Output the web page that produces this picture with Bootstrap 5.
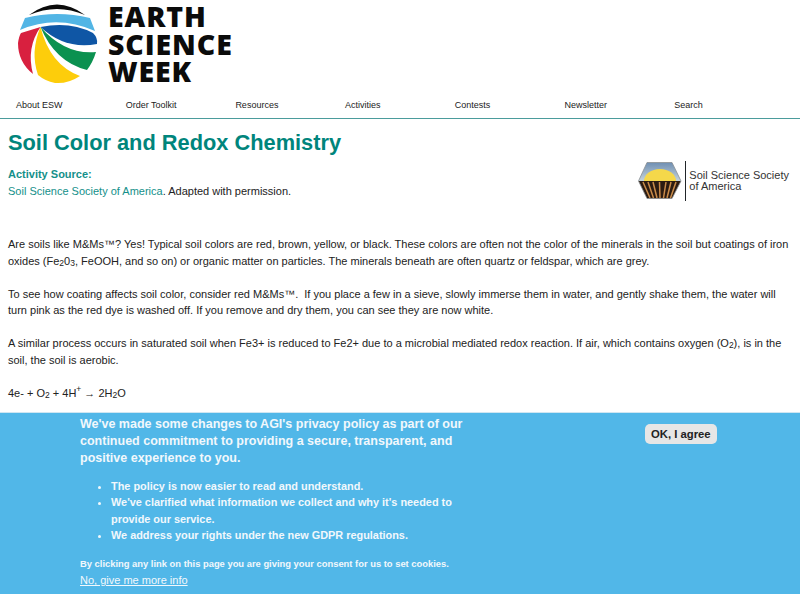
<!DOCTYPE html>
<html lang="en">
  <head>
    <meta charset="UTF-8" />
    <meta name="viewport" content="width=device-width, initial-scale=1.0" />
    <title>Soil Color and Redox Chemistry</title>
    <link href="https://cdn.jsdelivr.net/npm/bootstrap@5.3.2/dist/css/bootstrap.min.css" rel="stylesheet" />
    <style>
      html, body { height: 594px; overflow: hidden; }
      body { font-family: "Liberation Sans", Arial, sans-serif; font-size: 11px; line-height: 16.5px; color: #222; background: #fff; }
      a { color: #14908a; text-decoration: none; }
      .site-head { padding: 3px 0 0 18px; height: 99px; }
      .logo-words { font-family: "Open Sans", sans-serif; font-weight: 800; font-size: 28.5px; line-height: 27.5px; letter-spacing: 0.9px; color: #0b0b0b; margin-left: 10px; }
      .site-nav { height: 20px; padding-left: 16px; border-bottom: 1px solid #4b9c9c; }
      .site-nav a { width: 109.7px; color: #222; font-size: 9px; line-height: 11px; padding-top: 1px; }
      .page-title { color: #00857c; font-size: 21.8px; line-height: 26px; font-weight: 700; margin: 11px 0 10px; }
      .page-body { padding: 0 8px; }
      .source-label { color: #14908a; font-weight: 700; }
      .source-row { height: 70px; }
      .ssa-logo { margin: -5px 3px 0 0; }
      .ssa-text { font-size: 11px; line-height: 11px; color: #333; height: 40px; margin-left: 3px; padding-left: 3px; padding-top: 9px; }
      .page-body p { margin-bottom: 16.5px; }
      .page-body sub, .page-body sup { font-size: 8.5px; }
      .page-body sub { bottom: -0.15em; }
      .privacy-bar { position: fixed; left: 0; right: 0; top: 412px; bottom: 0; background: #51b7e8; color: #f1f8fc; border-top: 1px solid #cfe6f2; font-weight: 700; }
      .privacy-copy { width: 400px; margin-left: 80px; padding-top: 3px; }
      .privacy-lead { font-size: 12.5px; line-height: 17px; margin: 0 0 10.5px; }
      .privacy-list { font-size: 10.9px; line-height: 16.5px; padding-left: 31px; margin: 0 0 12.5px; }
      .privacy-note { font-size: 9.4px; line-height: 16px; margin: 0; }
      .privacy-more { font-size: 11px; font-weight: 400; line-height: 16px; color: #f1f8fc; text-decoration: underline; }
      .agree-btn { position: absolute; left: 645px; top: 11px; background: #e6e6e6; color: #222; font-size: 11.3px; font-weight: 700; line-height: 14px; padding: 3px 6px; border: 0; border-radius: 5px; }
    </style>
  </head>
  <body>
    <header class="site-head d-flex align-items-start">
      <svg width="80" height="81" viewBox="18 3 80 81" aria-hidden="true">
        <path d="M29 15 Q57 -6 85 15 Q57 3 29 15Z" fill="#0b0b0b" />
        <path d="M25 18 Q57 10 90 18 L95 31 Q57 14 20 30Z" fill="#52b5e5" />
        <path d="M40.5 27 Q70 21 93 33 Q98 38 97 44 Q65 50 40.5 27Z" fill="#0f56a5" />
        <path d="M40.5 27 Q65 55 96 52 Q93 62 87 70 Q55 62 40.5 27Z" fill="#0b9150" />
        <path d="M40.5 27 Q50 65 80 76 Q68 84 55 83 Q45 81 38 75 Q30 52 40.5 27Z" fill="#fdcd0b" />
        <path d="M40.5 27 Q26 48 33 74 Q18 62 18 43 Q19 36 21 33Z" fill="#d8203f" />
      </svg>
      <div class="logo-words">EARTH<br />SCIENCE<br />WEEK</div>
    </header>

    <nav class="site-nav d-flex">
      <a href="#">About ESW</a>
      <a href="#">Order Toolkit</a>
      <a href="#">Resources</a>
      <a href="#">Activities</a>
      <a href="#">Contests</a>
      <a href="#">Newsletter</a>
      <a href="#">Search</a>
    </nav>

    <main class="page-body">
      <h1 class="page-title">Soil Color and Redox Chemistry</h1>
      <div class="source-row d-flex justify-content-between align-items-start">
        <div>
          <div class="source-label">Activity Source:</div>
          <div><a href="#">Soil Science Society of America</a>. Adapted with permission.</div>
        </div>
        <div class="ssa-logo d-flex align-items-center">
          <svg width="44" height="38" viewBox="0 0 44 38" aria-hidden="true">
            <defs>
              <linearGradient id="ssaSky" x1="0" y1="0" x2="0" y2="1">
                <stop offset="0" stop-color="#6f8fb3" />
                <stop offset="1" stop-color="#c5d3da" />
              </linearGradient>
            </defs>
            <path d="M9 0.5H34L43 19H0.5Z" fill="url(#ssaSky)" />
            <path d="M6 19A16 12 0 0 1 38 19Z" fill="#f5d84a" />
            <path d="M0.5 19L9 36.5H34L43 19Z" fill="#2b1c12" />
            <path d="M5 20L12 36M10 20L15.5 36M15 20L19 36M21.5 20L22 36M28 20L25.5 36M33 20L29 36M38 20L32.5 36" stroke="#c98b4a" stroke-width="1.5" />
            <path d="M9 0.5H34L43 19L34 36.5H9L0.5 19Z" fill="none" stroke="#8b8f92" stroke-width="0.8" />
          </svg>
          <div class="border-start border-dark ssa-text">Soil Science Society<br />of America</div>
        </div>
      </div>
      <p>Are soils like M&amp;Ms™? Yes! Typical soil colors are red, brown, yellow, or black. These colors are often not the color of the minerals in the soil but coatings of iron oxides (Fe<sub>2</sub>0<sub>3</sub>, FeOOH, and so on) or organic matter on particles. The minerals beneath are often quartz or feldspar, which are grey.</p>
      <p>To see how coating affects soil color, consider red M&amp;Ms™.&nbsp; If you place a few in a sieve, slowly immerse them in water, and gently shake them, the water will turn pink as the red dye is washed off. If you remove and dry them, you can see they are now white.</p>
      <p>A similar process occurs in saturated soil when Fe3+ is reduced to Fe2+ due to a microbial mediated redox reaction. If air, which contains oxygen (O<sub>2</sub>), is in the soil, the soil is aerobic.</p>
      <p>4e- + O<sub>2</sub> + 4H<sup>+</sup> → 2H<sub>2</sub>O</p>
    </main>

    <aside class="privacy-bar">
      <div class="privacy-copy">
        <p class="privacy-lead">We've made some changes to AGI's privacy policy as part of our continued commitment to providing a secure, transparent, and positive experience to you.</p>
        <ul class="privacy-list">
          <li>The policy is now easier to read and understand.</li>
          <li>We've clarified what information we collect and why it's needed to provide our service.</li>
          <li>We address your rights under the new GDPR regulations.</li>
        </ul>
        <p class="privacy-note">By clicking any link on this page you are giving your consent for us to set cookies.</p>
        <a class="privacy-more" href="#">No, give me more info</a>
      </div>
      <button class="agree-btn" type="button">OK, I agree</button>
    </aside>

    <script src="https://cdn.jsdelivr.net/npm/bootstrap@5.3.2/dist/js/bootstrap.bundle.min.js"></script>
  </body>
</html>
